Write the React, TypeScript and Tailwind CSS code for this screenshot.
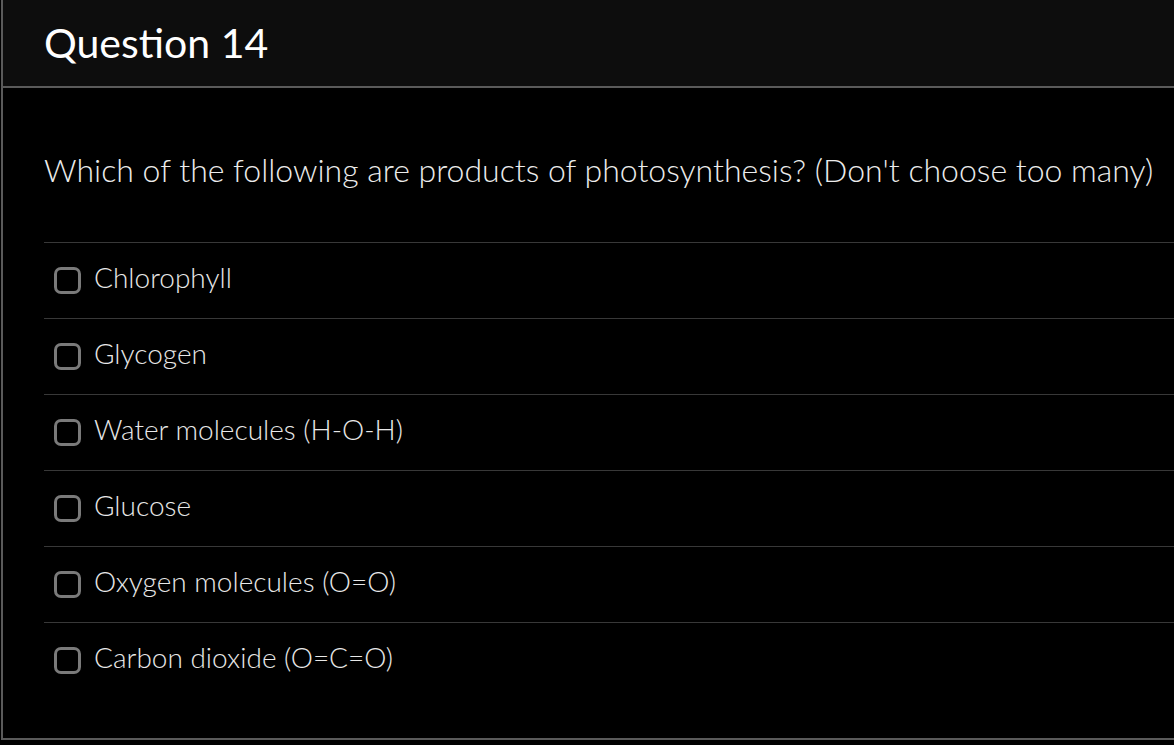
const options = [
  "Chlorophyll",
  "Glycogen",
  "Water molecules (H-O-H)",
  "Glucose",
  "Oxygen molecules (O=O)",
  "Carbon dioxide (O=C=O)",
];

export default function App() {
  return (
    <div
      className="min-h-screen bg-black pl-px"
      style={{ fontFamily: "Lato, 'Open Sans', sans-serif" }}
    >
      <div className="h-[740px] border-l-2 border-b-2 border-[#5a5a5a] flex flex-col">
        {/* Header */}
        <div className="h-[88px] shrink-0 bg-[#0d0d0d] border-b-2 border-[#5a5a5a] flex items-center pl-[41px]">
          <h1 className="text-[41px] font-normal text-white leading-none pb-[2px]">
            Question 14
          </h1>
        </div>

        {/* Body */}
        <div className="pl-[41px] pt-[62px]">
          <p className="text-[32px] font-light text-[#ececec] leading-[40px] whitespace-nowrap">
            Which of the following are products of photosynthesis? (Don't choose too many)
          </p>

          <div className="mt-[52px]">
            {options.map((opt) => (
              <label
                key={opt}
                className="h-[76px] border-t border-[#383838] flex items-center pl-[10px] gap-[13px]"
              >
                <span className="w-[27px] h-[27px] rounded-[7px] border-[3px] border-[#7a7a7a] shrink-0" />
                <span className="text-[28px] font-light text-[#e8e8e8] leading-none pb-[8px]">
                  {opt}
                </span>
              </label>
            ))}
          </div>
        </div>
      </div>
    </div>
  );
}
